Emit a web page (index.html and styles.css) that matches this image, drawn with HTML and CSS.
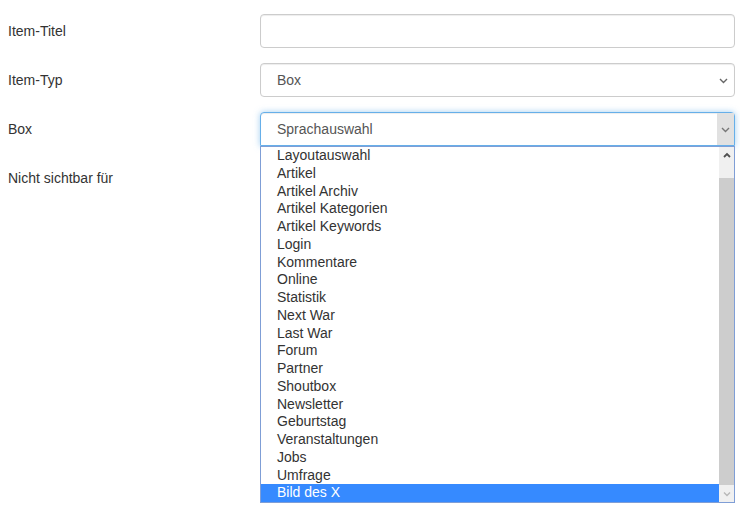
FILE: index.html
```html
<!DOCTYPE html>
<html lang="de">
<head>
<meta charset="utf-8">
<title>Item</title>
<link rel="stylesheet" href="styles.css">
</head>
<body>
<form class="form">
  <div class="row">
    <label class="label">Item-Titel</label>
    <div class="control"><div class="input"></div></div>
  </div>
  <div class="row">
    <label class="label">Item-Typ</label>
    <div class="control">
      <div class="input select">
        <span class="value">Box</span>
        <svg class="chev" width="9" height="6" viewBox="0 0 9 6"><path d="M1 1 L4.5 4.5 L8 1" fill="none" stroke="#666" stroke-width="1.4"/></svg>
      </div>
    </div>
  </div>
  <div class="row row-open">
    <label class="label">Box</label>
    <div class="control open">
      <div class="input select focus">
        <span class="value">Sprachauswahl</span>
        <span class="arrowbox">
          <svg width="9" height="6" viewBox="0 0 9 6"><path d="M1 1 L4.5 4.5 L8 1" fill="none" stroke="#777" stroke-width="1.4"/></svg>
        </span>
      </div>
      <div class="dropdown">
        <ul class="options">
          <li>Layoutauswahl</li>
          <li>Artikel</li>
          <li>Artikel Archiv</li>
          <li>Artikel Kategorien</li>
          <li>Artikel Keywords</li>
          <li>Login</li>
          <li>Kommentare</li>
          <li>Online</li>
          <li>Statistik</li>
          <li>Next War</li>
          <li>Last War</li>
          <li>Forum</li>
          <li>Partner</li>
          <li>Shoutbox</li>
          <li>Newsletter</li>
          <li>Geburtstag</li>
          <li>Veranstaltungen</li>
          <li>Jobs</li>
          <li>Umfrage</li>
          <li class="selected">Bild des X</li>
        </ul>
        <div class="scrollbar">
          <div class="sb-btn sb-up">
            <svg width="8" height="6" viewBox="0 0 8 6"><path d="M1 5 L4 2 L7 5" fill="none" stroke="#505050" stroke-width="1.8"/></svg>
          </div>
          <div class="sb-thumb"></div>
          <div class="sb-btn sb-down">
            <svg width="8" height="6" viewBox="0 0 8 6"><path d="M1 1.5 L4 4.5 L7 1.5" fill="none" stroke="#b8b8b8" stroke-width="1.4"/></svg>
          </div>
        </div>
      </div>
    </div>
  </div>
  <div class="row">
    <label class="label">Nicht sichtbar für</label>
    <div class="control"><div class="input multi"></div></div>
  </div>
</form>
</body>
</html>
```
FILE: styles.css
```css
* { box-sizing: border-box; }
html, body { margin: 0; padding: 0; background: #fff; min-height: 100%; }
body {
  font-family: "Liberation Sans", Arial, sans-serif;
  font-size: 14px;
  color: #333;
  min-height: 509px;
}
.form {
  display: flex;
  flex-direction: column;
  gap: 15px;
  padding: 14px 5px 0 8px;
}
.row {
  display: grid;
  grid-template-columns: 252px 1fr;
}
.row-open { position: relative; z-index: 10; }
.label {
  padding-top: 7px;
  line-height: 20px;
  color: #333;
}
.control { position: relative; }
.input {
  height: 34px;
  border: 1px solid #ccc;
  border-radius: 4px;
  background: #fff;
  box-shadow: inset 0 1px 1px rgba(0,0,0,.075);
}
.select {
  display: flex;
  align-items: center;
  justify-content: space-between;
  padding: 0 5px 0 16px;
  color: #555;
}
.value { line-height: 20px; }
.chev { margin-right: 1px; margin-top: 1px; }
.select.focus {
  border-color: #66afe9;
  border-radius: 4px 4px 0 0;
  box-shadow: inset 0 1px 1px rgba(0,0,0,.075), 0 0 6px rgba(102,175,233,.6);
  padding-right: 0;
  align-items: stretch;
}
.select.focus .value { align-self: center; }
.arrowbox {
  width: 17px;
  background: #e1e1e1;
  display: flex;
  align-items: center;
  justify-content: center;
  padding-top: 1px;
}
.multi { height: 330px; }
.dropdown {
  position: absolute;
  top: 34px;
  left: 0;
  width: 475px;
  height: 357px;
  border: 1px solid #7f9ed6;
  background: #fff;
  display: flex;
  z-index: 5;
}
.options {
  list-style: none;
  margin: 0;
  padding: 0;
  flex: 1;
  display: flex;
  flex-direction: column;
}
.options li {
  height: 17.75px;
  line-height: 17.75px;
  padding-left: 16px;
  color: #333;
  white-space: nowrap;
}
.options li.selected {
  background: #368aff;
  color: #fff;
}
.scrollbar {
  width: 15px;
  display: flex;
  flex-direction: column;
  background: #f0f0f0;
}
.sb-btn {
  display: flex;
  align-items: center;
  justify-content: center;
  background: #f0f0f0;
}
.sb-up { height: 31px; align-items: flex-start; padding-top: 5px; }
.sb-thumb { flex: 1; background: #cdcdcd; }
.sb-down { height: 17px; }
```
